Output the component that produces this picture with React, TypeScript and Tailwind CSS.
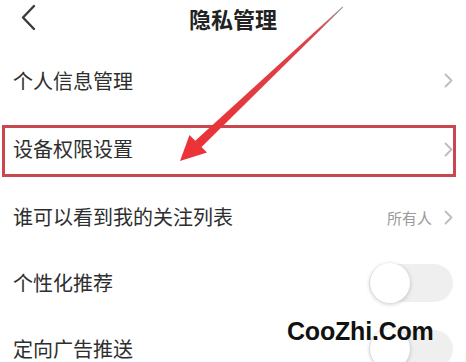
import React from "react";

const font = { fontFamily: '"Noto Sans CJK SC", "Noto Sans", sans-serif' };

const Chevron: React.FC = () => (
  <svg width="9" height="15" viewBox="0 0 9 15" className="shrink-0">
    <path d="M1.5 1.5 L7.5 7.5 L1.5 13.5" fill="none" stroke="#bdbdbd" strokeWidth="1.8" strokeLinecap="round" strokeLinejoin="round" />
  </svg>
);

const Toggle: React.FC = () => (
  <div className="relative w-[86px] h-[40px] shrink-0">
    <div className="absolute left-[2px] right-0 top-[1px] bottom-[1px] rounded-full bg-[#efefef]" />
    <div className="absolute left-[3px] top-0 w-[40px] h-[40px] rounded-full bg-white shadow-[0_1px_4px_rgba(0,0,0,0.22)]" />
  </div>
);

const Row: React.FC<{ label: string; h: string; children?: React.ReactNode }> = ({ label, h, children }) => (
  <div className={`relative flex items-center justify-between pl-[13px] pr-[13px] ${h}`}>
    <span className="text-[20px] text-[#2e2e2e] leading-none">{label}</span>
    {children}
  </div>
);

export default function App() {
  return (
    <div className="relative w-[466px] h-[362px] overflow-hidden bg-white" style={font}>
      <div className="relative flex items-center justify-center h-[47px]">
        <svg width="16" height="28" viewBox="0 0 16 28" className="absolute left-[21px] top-[4px]">
          <path d="M13 2 L2 13.5 L13 25" fill="none" stroke="#3a3a3a" strokeWidth="2.4" strokeLinecap="round" strokeLinejoin="round" />
        </svg>
        <h1 className="text-[22px] font-bold text-[#222] leading-none -mt-[12px]">隐私管理</h1>
      </div>

      <Row label="个人信息管理" h="h-[67px]">
        <Chevron />
      </Row>
      <Row label="设备权限设置" h="h-[70px]">
        <Chevron />
        <div className="absolute left-[2px] right-[10px] top-[11px] bottom-[7px] border-[3px] border-[#c9474e]" />
      </Row>
      <Row label="谁可以看到我的关注列表" h="h-[66px]">
        <div className="flex items-center gap-[12px]">
          <span className="text-[15px] text-[#9a9a9a] leading-none">所有人</span>
          <Chevron />
        </div>
      </Row>
      <Row label="个性化推荐" h="h-[66px]">
        <Toggle />
      </Row>
      <Row label="定向广告推送" h="h-[66px]">
        <Toggle />
      </Row>

      <svg className="absolute inset-0 pointer-events-none" width="466" height="362" viewBox="0 0 466 362">
        <defs>
          <linearGradient id="shaft" x1="342" y1="7" x2="198" y2="144" gradientUnits="userSpaceOnUse">
            <stop offset="0" stopColor="#9a9a9a" />
            <stop offset="0.18" stopColor="#d8454b" />
            <stop offset="1" stopColor="#ea3237" />
          </linearGradient>
        </defs>
        <polygon points="342.5,6.5 343,7.5 201,147.5 195,141" fill="url(#shaft)" />
        <polygon points="180,161 189.5,135 207,152.5" fill="#ec3338" />
      </svg>

      <div
        className="absolute left-[287px] top-[319px] text-[25px] font-bold text-[#111] leading-none tracking-[-0.2px]"
        style={{ fontFamily: '"Liberation Sans", Arial, sans-serif' }}
      >
        CooZhi.Com
      </div>
    </div>
  );
}
